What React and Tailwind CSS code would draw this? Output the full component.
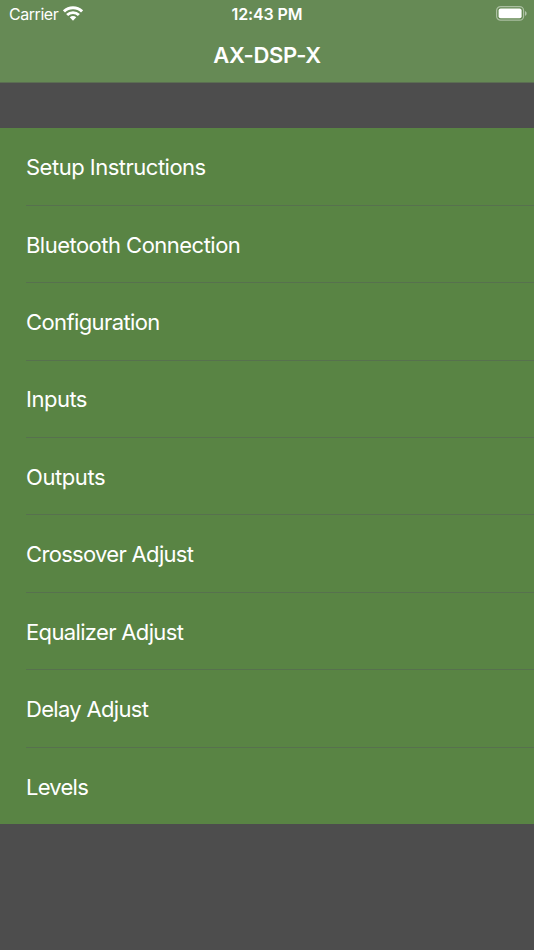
import React from 'react';

const MENU_ITEMS = [
  { label: 'Setup Instructions', tracking: 'tracking-[-0.5px]' },
  { label: 'Bluetooth Connection', tracking: 'tracking-[-0.52px]' },
  { label: 'Configuration', tracking: 'tracking-[-0.61px]' },
  { label: 'Inputs', tracking: 'tracking-[-0.5px]' },
  { label: 'Outputs', tracking: 'tracking-[-0.42px]' },
  { label: 'Crossover Adjust', tracking: 'tracking-[-0.68px]' },
  { label: 'Equalizer Adjust', tracking: 'tracking-[-0.65px]' },
  { label: 'Delay Adjust', tracking: 'tracking-[-0.68px]' },
  { label: 'Levels', tracking: 'tracking-[-0.75px]' },
];

function WifiIcon() {
  return (
    <svg className="-mt-px" width="20" height="15" viewBox="0 0 19 14" fill="none" stroke="white" strokeWidth="2.8">
      <path d="M0.9 5a12.4 12.4 0 0 1 17.2 0" />
      <path d="M3.9 8.4a8.2 8.2 0 0 1 11.2 0" />
      <path d="M9.5 13.8l3.1-3.2a4.4 4.4 0 0 0-6.2 0z" fill="white" stroke="none" />
    </svg>
  );
}

function BatteryIcon() {
  return (
    <svg width="31" height="15" viewBox="0 0 31 15" fill="none">
      <rect x="0.6" y="0.6" width="27" height="13.6" rx="4" stroke="white" strokeOpacity="0.45" strokeWidth="1.2" />
      <rect x="2.6" y="2.6" width="23" height="9.6" rx="2" fill="white" />
      <path d="M29 5v4.8c1-.4 1.6-1.3 1.6-2.4S30 5.4 29 5z" fill="white" fillOpacity="0.5" />
    </svg>
  );
}

function StatusBar() {
  return (
    <div className="grid grid-cols-3 items-center h-[27px] pl-[9px] pr-[7px] text-[16px]">
      <div className="flex items-center gap-[5px]">
        <span className="tracking-[-0.45px]">Carrier</span>
        <WifiIcon />
      </div>
      <span className="text-center font-semibold tracking-[-0.1px] -translate-x-px">12:43 PM</span>
      <div className="flex justify-end">
        <BatteryIcon />
      </div>
    </div>
  );
}

export default function App() {
  return (
    <div className="h-[950px] w-full bg-[#4d4d4d] text-white font-['Inter',sans-serif] overflow-hidden">
      <header className="h-[83px] bg-[#668a55] border-b border-[#5b6e52]">
        <StatusBar />
        <h1 className="h-[56px] leading-[56px] text-center text-[22px] font-semibold tracking-[-0.35px]">AX-DSP-X</h1>
      </header>

      <ul className="mt-[45px] h-[696px] pt-[0.5px] bg-[#598444]">
        {MENU_ITEMS.map(({ label, tracking }, i) => (
          <li key={label} className="pl-[26px]">
            <div
              className={`h-[77.4px] pt-[2px] flex items-center text-[22px] ${tracking} ${i < MENU_ITEMS.length - 1 ? 'border-b border-[#57714e]' : ''}`}
            >
              {label}
            </div>
          </li>
        ))}
      </ul>
    </div>
  );
}
